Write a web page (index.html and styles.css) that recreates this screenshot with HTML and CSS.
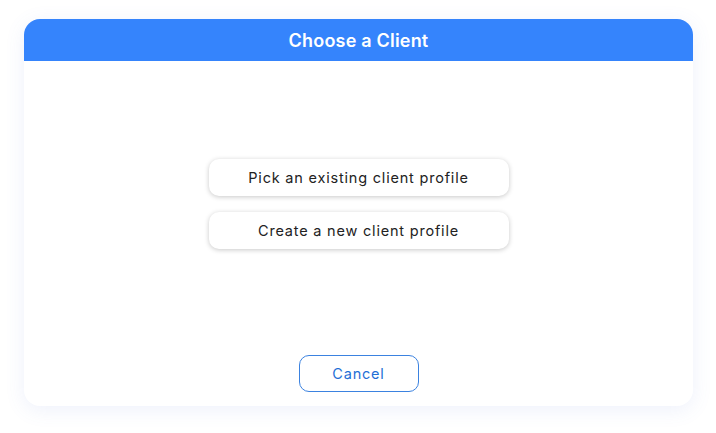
FILE: index.html
```html
<!DOCTYPE html>
<html>
<head>
<meta charset="utf-8">
<link rel="stylesheet" href="styles.css">
</head>
<body>
<div class="page">
  <div class="dialog">
    <div class="dialog-header">Choose a Client</div>
    <div class="dialog-body">
      <div class="options">
        <button class="option">Pick an existing client profile</button>
        <button class="option">Create a new client profile</button>
      </div>
      <div class="footer">
        <button class="cancel">Cancel</button>
      </div>
    </div>
  </div>
</div>
</body>
</html>
```
FILE: styles.css
```css
html, body {
  margin: 0;
  padding: 0;
  background: #ffffff;
}
.page {
  width: 716px;
  height: 433px;
  padding: 19px 23px 0 24px;
  box-sizing: border-box;
  font-family: "Inter", "Noto Sans", sans-serif;
}
.dialog {
  width: 669px;
  height: 387px;
  background: #ffffff;
  border-radius: 16px;
  box-shadow: 0 4px 20px rgba(90, 120, 220, 0.10);
  display: flex;
  flex-direction: column;
  overflow: hidden;
}
.dialog-header {
  height: 42px;
  background: #3584fc;
  color: #ffffff;
  font-size: 18px;
  font-weight: 600;
  letter-spacing: 0.2px;
  display: flex;
  align-items: center;
  justify-content: center;
  flex: none;
}
.dialog-body {
  flex: 1;
  display: flex;
  flex-direction: column;
  align-items: center;
  padding-top: 98px;
}
.options {
  display: flex;
  flex-direction: column;
  gap: 16px;
}
.option {
  width: 300px;
  height: 37px;
  border: none;
  border-radius: 10px;
  background: #ffffff;
  box-shadow: 0 1px 5px rgba(0, 0, 0, 0.22);
  font-family: inherit;
  font-size: 14.5px;
  color: #222222;
  letter-spacing: 0.8px;
  cursor: pointer;
}
.footer {
  margin-top: auto;
  padding-bottom: 14px;
}
.cancel {
  width: 120px;
  height: 37px;
  border: 1px solid #3b82e0;
  border-radius: 10px;
  background: #ffffff;
  color: #1f6fd6;
  font-family: inherit;
  font-size: 14.5px;
  letter-spacing: 0.8px;
  cursor: pointer;
}
```
